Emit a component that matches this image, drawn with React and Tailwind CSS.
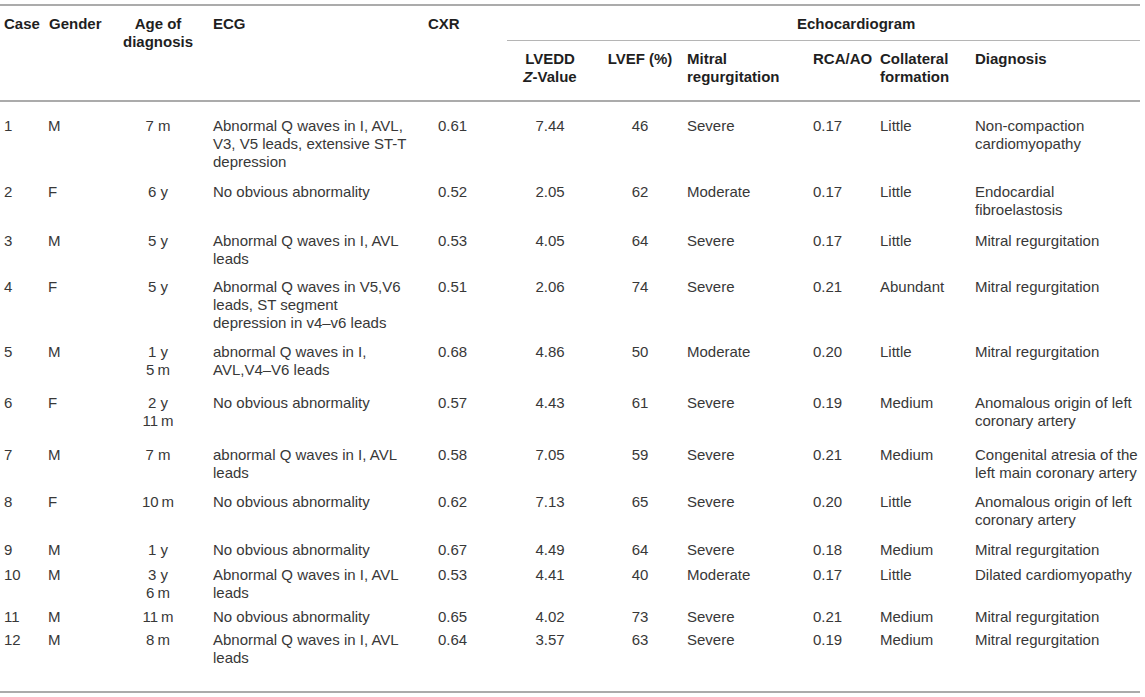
import React from "react";

const rows = [
  { c: "1", g: "M", age: ["7 m"], ecg: "Abnormal Q waves in I, AVL, V3, V5 leads, extensive ST-T depression", cxr: "0.61", lvedd: "7.44", lvef: "46", mr: "Severe", rca: "0.17", col: "Little", dx: "Non-compaction cardiomyopathy", h: "h-[77px]", pt: "pt-[15px]" },
  { c: "2", g: "F", age: ["6 y"], ecg: "No obvious abnormality", cxr: "0.52", lvedd: "2.05", lvef: "62", mr: "Moderate", rca: "0.17", col: "Little", dx: "Endocardial fibroelastosis", h: "h-[49px]", pt: "pt-[5px]" },
  { c: "3", g: "M", age: ["5 y"], ecg: "Abnormal Q waves in I, AVL leads", cxr: "0.53", lvedd: "4.05", lvef: "64", mr: "Severe", rca: "0.17", col: "Little", dx: "Mitral regurgitation", h: "h-[46px]", pt: "pt-[5px]" },
  { c: "4", g: "F", age: ["5 y"], ecg: "Abnormal Q waves in V5,V6 leads, ST segment depression in v4\u2013v6 leads", cxr: "0.51", lvedd: "2.06", lvef: "74", mr: "Severe", rca: "0.21", col: "Abundant", dx: "Mitral regurgitation", h: "h-[65px]", pt: "pt-[5px]" },
  { c: "5", g: "M", age: ["1 y", "5\u2009m"], ecg: "abnormal Q waves in I, AVL,V4\u2013V6 leads", cxr: "0.68", lvedd: "4.86", lvef: "50", mr: "Moderate", rca: "0.20", col: "Little", dx: "Mitral regurgitation", h: "h-[51px]", pt: "pt-[5px]" },
  { c: "6", g: "F", age: ["2 y", "11\u2009m"], ecg: "No obvious abnormality", cxr: "0.57", lvedd: "4.43", lvef: "61", mr: "Severe", rca: "0.19", col: "Medium", dx: "Anomalous origin of left coronary artery", h: "h-[52px]", pt: "pt-[5px]" },
  { c: "7", g: "M", age: ["7 m"], ecg: "abnormal Q waves in I, AVL leads", cxr: "0.58", lvedd: "7.05", lvef: "59", mr: "Severe", rca: "0.21", col: "Medium", dx: "Congenital atresia of the left main coronary artery", h: "h-[47px]", pt: "pt-[5px]" },
  { c: "8", g: "F", age: ["10\u2009m"], ecg: "No obvious abnormality", cxr: "0.62", lvedd: "7.13", lvef: "65", mr: "Severe", rca: "0.20", col: "Little", dx: "Anomalous origin of left coronary artery", h: "h-[48px]", pt: "pt-[5px]" },
  { c: "9", g: "M", age: ["1 y"], ecg: "No obvious abnormality", cxr: "0.67", lvedd: "4.49", lvef: "64", mr: "Severe", rca: "0.18", col: "Medium", dx: "Mitral regurgitation", h: "h-[25px]", pt: "pt-[5px]" },
  { c: "10", g: "M", age: ["3 y", "6\u2009m"], ecg: "Abnormal Q waves in I, AVL leads", cxr: "0.53", lvedd: "4.41", lvef: "40", mr: "Moderate", rca: "0.17", col: "Little", dx: "Dilated cardiomyopathy", h: "h-[42px]", pt: "pt-[5px]" },
  { c: "11", g: "M", age: ["11\u2009m"], ecg: "No obvious abnormality", cxr: "0.65", lvedd: "4.02", lvef: "73", mr: "Severe", rca: "0.21", col: "Medium", dx: "Mitral regurgitation", h: "h-[23px]", pt: "pt-[5px]" },
  { c: "12", g: "M", age: ["8\u2009m"], ecg: "Abnormal Q waves in I, AVL leads", cxr: "0.64", lvedd: "3.57", lvef: "63", mr: "Severe", rca: "0.19", col: "Medium", dx: "Mitral regurgitation", h: "h-[66px]", pt: "pt-[5px]" },
];

const hb = "border-b-2 border-[#ababab]";

export default function App() {
  return (
    <div className="w-[1145px] h-[697px] bg-white pt-[4px] font-['Liberation_Sans',Arial,sans-serif] text-[15px] leading-[18px] text-[#383838]">
      <table className="table-fixed border-collapse w-[1140px] border-t-2 border-b-2 border-[#ababab]">
        <colgroup>
          <col className="w-[45px]" />
          <col className="w-[73px]" />
          <col className="w-[80px]" />
          <col className="w-[217px]" />
          <col className="w-[92px]" />
          <col className="w-[86px]" />
          <col className="w-[94px]" />
          <col className="w-[126px]" />
          <col className="w-[67px]" />
          <col className="w-[95px]" />
          <col className="w-[165px]" />
        </colgroup>
        <thead className="font-bold text-[#1f1f1f]">
          <tr className="h-[35px]">
            <th rowSpan={2} className={`align-top text-left pt-[9px] pl-[4px] font-bold ${hb}`}>Case</th>
            <th rowSpan={2} className={`align-top text-left pt-[9px] pl-[4px] font-bold ${hb}`}>Gender</th>
            <th rowSpan={2} className={`align-top text-center pt-[9px] font-bold ${hb}`}>Age of<br />diagnosis</th>
            <th rowSpan={2} className={`align-top text-left pt-[9px] pl-[15px] font-bold ${hb}`}>ECG</th>
            <th rowSpan={2} className={`align-top text-left pt-[9px] pl-[13px] font-bold ${hb}`}>CXR</th>
            <th colSpan={6} className="align-top text-left pt-[9px] pl-[290px] font-bold border-b border-[#b5b5b5]">Echocardiogram</th>
          </tr>
          <tr className="h-[61px]">
            <th className={`align-top text-center pt-[9px] font-bold ${hb}`}>LVEDD<br /><i>Z</i>-Value</th>
            <th className={`align-top text-center pt-[9px] font-bold ${hb}`}>LVEF (%)</th>
            <th className={`align-top text-left pt-[9px] font-bold ${hb}`}>Mitral<br />regurgitation</th>
            <th className={`align-top text-left pt-[9px] font-bold ${hb}`}>RCA/AO</th>
            <th className={`align-top text-left pt-[9px] font-bold ${hb}`}>Collateral<br />formation</th>
            <th className={`align-top text-left pt-[9px] font-bold ${hb}`}>Diagnosis</th>
          </tr>
        </thead>
        <tbody>
          {rows.map((r) => (
            <tr key={r.c} className={r.h}>
              <td className={`align-top ${r.pt} pl-[4px]`}>{r.c}</td>
              <td className={`align-top ${r.pt} pl-[3px]`}>{r.g}</td>
              <td className={`align-top ${r.pt} text-center`}>
                {r.age.map((a, i) => (
                  <div key={i}>{a}</div>
                ))}
              </td>
              <td className={`align-top ${r.pt} pl-[15px] pr-[5px]`}>{r.ecg}</td>
              <td className={`align-top ${r.pt} pl-[23px]`}>{r.cxr}</td>
              <td className={`align-top ${r.pt} text-center`}>{r.lvedd}</td>
              <td className={`align-top ${r.pt} text-center`}>{r.lvef}</td>
              <td className={`align-top ${r.pt}`}>{r.mr}</td>
              <td className={`align-top ${r.pt}`}>{r.rca}</td>
              <td className={`align-top ${r.pt}`}>{r.col}</td>
              <td className={`align-top ${r.pt}`}>{r.dx}</td>
            </tr>
          ))}
        </tbody>
      </table>
    </div>
  );
}
